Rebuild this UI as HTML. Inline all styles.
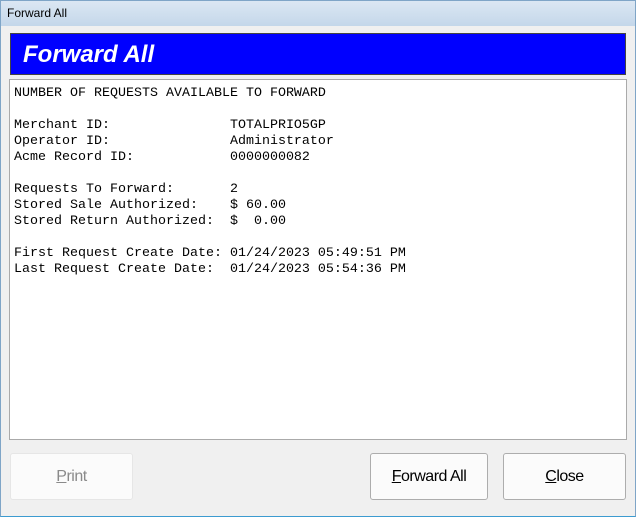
<html><head><style>
body{margin:0;width:636px;height:517px;overflow:hidden;background:#f0f0f0;font-family:"Liberation Sans",sans-serif;position:relative}
.win{position:absolute;left:0;top:0;width:634px;height:515px;border:1px solid #7fa5c7;border-bottom-color:#3c9bd0;background:#f0f0f0}
.tb{position:absolute;left:0;top:0;width:634px;height:25px;background:linear-gradient(#dbe7f3,#c4d7ea);font-size:12px;line-height:25px;padding-left:6px;box-sizing:border-box;color:#000}
.hdr{position:absolute;left:10px;top:33px;width:616px;height:42px;background:#0000ff;border:1px solid #444;box-sizing:border-box;color:#fff;font-weight:bold;font-style:italic;font-size:24px;line-height:42px;padding-left:12px}
.txt{position:absolute;left:9px;top:79px;width:618px;height:361px;background:#fff;border:1px solid #aaa;box-sizing:border-box;font-family:"Liberation Mono",monospace;font-size:13.33px;line-height:16px;padding:6px 0 0 4px;white-space:pre;margin:0;color:#000}
.btn{position:absolute;top:453px;height:47px;border:1px solid #ccc;border-radius:3px;background:#fbfbfb;box-sizing:border-box;font-size:16px;text-align:center;line-height:45px;letter-spacing:-0.5px}
</style></head><body>
<div class="win">
<div class="tb">Forward All</div>
</div>
<div class="hdr">Forward All</div>
<pre class="txt">NUMBER OF REQUESTS AVAILABLE TO FORWARD

Merchant ID:               TOTALPRIO5GP
Operator ID:               Administrator
Acme Record ID:            0000000082

Requests To Forward:       2
Stored Sale Authorized:    $ 60.00
Stored Return Authorized:  $  0.00

First Request Create Date: 01/24/2023 05:49:51 PM
Last Request Create Date:  01/24/2023 05:54:36 PM</pre>
<div class="btn" style="left:10px;width:123px;color:#8a8a8a;border-color:#e6e6e6"><u>P</u>rint</div>
<div class="btn" style="left:370px;width:118px;border-color:#adadad"><u>F</u>orward All</div>
<div class="btn" style="left:503px;width:123px;border-color:#adadad"><u>C</u>lose</div>
</body></html>
